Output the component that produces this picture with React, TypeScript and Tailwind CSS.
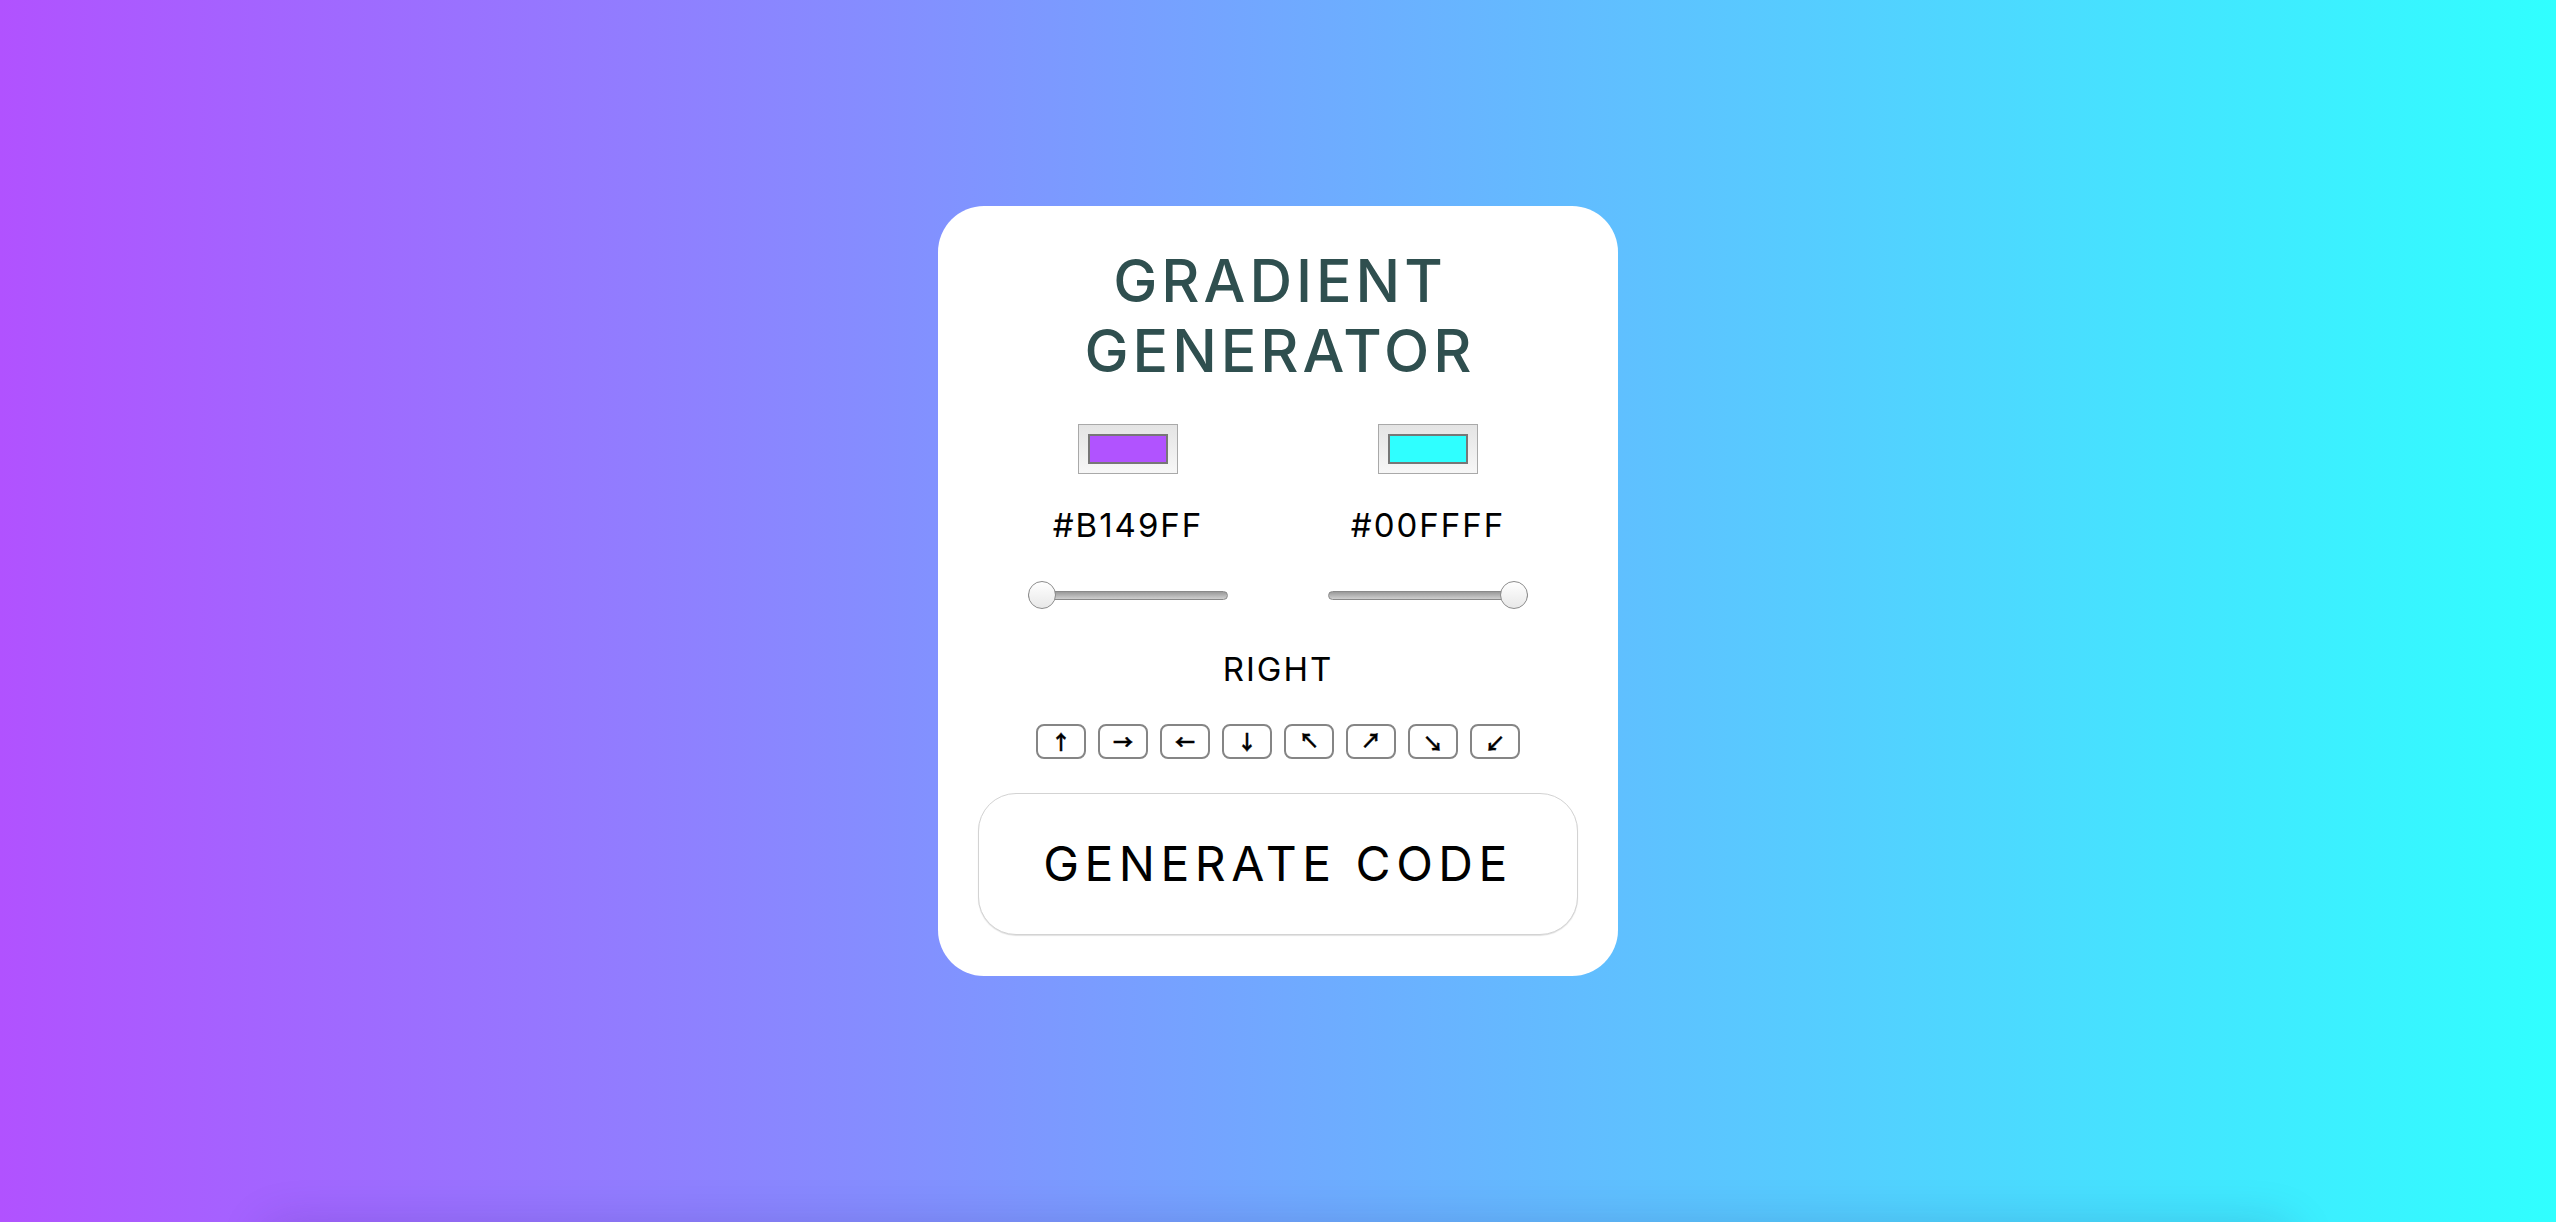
import React from "react";

const font = { fontFamily: "Inter, 'Noto Sans', sans-serif" };

function Swatch({ color }: { color: string }) {
  return (
    <div className="w-[100px] h-[50px] border border-[#a9a9a9] bg-[linear-gradient(to_bottom,#e4e4e4,#f7f7f7)] p-[9px]">
      <div className="w-full h-full border-2 border-[#777777]" style={{ background: color }} />
    </div>
  );
}

function Slider({ value }: { value: number }) {
  return (
    <div className="relative w-[200px] h-[30px] flex items-center">
      <div className="w-full h-[9px] rounded-full border border-[#8a8a8a] bg-[linear-gradient(to_bottom,#9a9a9a,#cfcfcf)]" />
      <div
        className={
          "absolute top-[1px] w-[28px] h-[28px] rounded-full border-[1.5px] border-[#8c8c8c] bg-[linear-gradient(to_bottom,#ffffff,#e8e8e8)] " +
          (value === 0 ? "left-0" : "right-0")
        }
      />
    </div>
  );
}

const arrows = [
  { a: "↑", c: "" },
  { a: "→", c: "" },
  { a: "←", c: "" },
  { a: "↓", c: "" },
  { a: "↖", c: "-translate-y-[2px]" },
  { a: "↗", c: "-translate-y-[2px]" },
  { a: "↘", c: "translate-y-[2px]" },
  { a: "↙", c: "translate-y-[2px]" },
];

export default function App() {
  return (
    <div
      className="relative w-full h-[1222px] overflow-hidden flex justify-center pt-[206px] bg-[linear-gradient(to_right,#b152ff,#30ffff)]"
      style={font}
    >
      <div className="w-[680px] h-[770px] bg-white rounded-[46px] flex flex-col items-center px-[40px] pt-[40px]">
        <h1 className="w-[500px] text-center text-[59px] leading-[70px] font-medium text-[#2f4f4f] tracking-[4px] pl-[4px]">
          GRADIENT GENERATOR
        </h1>
        <div className="mt-[38px] flex gap-[100px]">
          <div className="w-[200px] flex flex-col items-center">
            <Swatch color="#b153ff" />
            <div className="mt-[31px] h-[40px] leading-[40px] text-[33px] text-black tracking-[2px]">#B149FF</div>
            <div className="mt-[35px]">
              <Slider value={0} />
            </div>
          </div>
          <div className="w-[200px] flex flex-col items-center">
            <Swatch color="#2fffff" />
            <div className="mt-[31px] h-[40px] leading-[40px] text-[33px] text-black tracking-[2px]">#00FFFF</div>
            <div className="mt-[35px]">
              <Slider value={100} />
            </div>
          </div>
        </div>
        <div className="mt-[39px] h-[40px] leading-[40px] text-[33px] text-black tracking-[2px]">RIGHT</div>
        <div className="mt-[35px] flex gap-[12px]">
          {arrows.map((x) => (
            <button
              key={x.a}
              className="w-[50px] h-[35px] border-2 border-[#858585] rounded-[8px] bg-white flex items-center justify-center text-black"
            >
              <span
                className={"block text-[20px] leading-none font-bold [-webkit-text-stroke:0.4px_black] " + x.c}
                style={{ fontFamily: "'Noto Sans CJK JP', 'DejaVu Sans', sans-serif" }}
              >
                {x.a}
              </span>
            </button>
          ))}
        </div>
        <button className="mt-[34px] w-[600px] h-[142px] rounded-[38px] border border-[#d3d3d3] bg-white shadow-[0_1px_1px_rgba(0,0,0,0.12)] text-[48px] font-normal text-black tracking-[5.5px]">
          GENERATE CODE
        </button>
      </div>
      <div className="absolute left-[280px] right-[280px] top-[1240px] h-[40px] shadow-[0_0_50px_12px_rgba(40,20,100,0.2)]" />
    </div>
  );
}
